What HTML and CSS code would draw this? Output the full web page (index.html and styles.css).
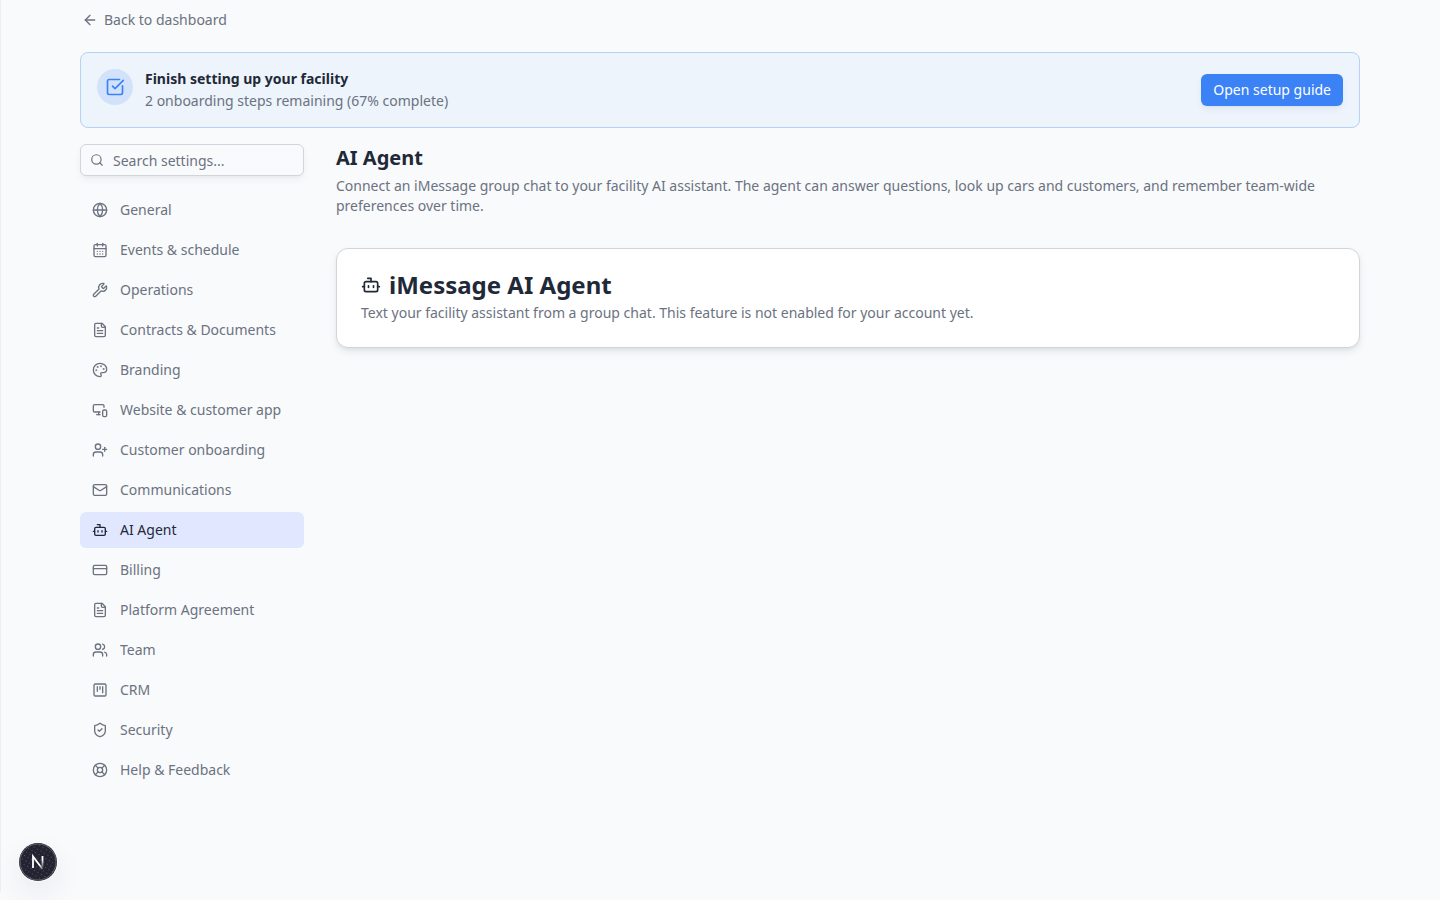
FILE: index.html
```html
<!DOCTYPE html>
<html lang="en">
<head>
    <meta charset="UTF-8">
    <meta name="viewport" content="width=device-width, initial-scale=1.0">
    <title>AI Agent - Settings</title>
    <link rel="stylesheet" href="styles.css">
</head>
<body>
    <div class="page">
        <div class="container">
            <a href="#" class="back-link">
                <svg class="icon" viewBox="0 0 24 24"><path d="m12 19-7-7 7-7"/><path d="M19 12H5"/></svg>
                Back to dashboard
            </a>

            <section class="banner">
                <div class="banner-icon">
                    <svg class="icon icon-lg" viewBox="0 0 24 24"><path d="M21 10.656V19a2 2 0 0 1-2 2H5a2 2 0 0 1-2-2V5a2 2 0 0 1 2-2h12.344"/><path d="m9 11 3 3L22 4"/></svg>
                </div>
                <div class="banner-text">
                    <p class="banner-title">Finish setting up your facility</p>
                    <p class="banner-sub">2 onboarding steps remaining (67% complete)</p>
                </div>
                <button type="button" class="btn-primary">Open setup guide</button>
            </section>

            <div class="layout">
                <aside class="sidebar">
                    <div class="search">
                        <svg class="icon search-icon" viewBox="0 0 24 24"><path d="m21 21-4.34-4.34"/><circle cx="11" cy="11" r="8"/></svg>
                        <input type="search" id="settingsSearch" placeholder="Search settings..." aria-label="Search settings">
                    </div>

                    <nav class="nav" aria-label="Settings">
                        <a href="#" class="nav-item">
                            <svg class="icon" viewBox="0 0 24 24"><circle cx="12" cy="12" r="10"/><path d="M12 2a14.5 14.5 0 0 0 0 20 14.5 14.5 0 0 0 0-20"/><path d="M2 12h20"/></svg>
                            General
                        </a>
                        <a href="#" class="nav-item">
                            <svg class="icon" viewBox="0 0 24 24"><path d="M8 2v4"/><path d="M16 2v4"/><rect width="18" height="18" x="3" y="4" rx="2"/><path d="M3 10h18"/><path d="M8 14h.01"/><path d="M12 14h.01"/><path d="M16 14h.01"/><path d="M8 18h.01"/><path d="M12 18h.01"/><path d="M16 18h.01"/></svg>
                            Events &amp; schedule
                        </a>
                        <a href="#" class="nav-item">
                            <svg class="icon" viewBox="0 0 24 24"><path d="M14.7 6.3a1 1 0 0 0 0 1.4l1.6 1.6a1 1 0 0 0 1.4 0l3.106-3.105c.32-.322.863-.22.983.218a6 6 0 0 1-8.259 7.057l-7.91 7.91a1 1 0 0 1-2.999-3l7.91-7.91a6 6 0 0 1 7.057-8.259c.438.12.54.662.219.984z"/></svg>
                            Operations
                        </a>
                        <a href="#" class="nav-item">
                            <svg class="icon" viewBox="0 0 24 24"><path d="M15 2H6a2 2 0 0 0-2 2v16a2 2 0 0 0 2 2h12a2 2 0 0 0 2-2V7Z"/><path d="M14 2v4a2 2 0 0 0 2 2h4"/><path d="M10 9H8"/><path d="M16 13H8"/><path d="M16 17H8"/></svg>
                            Contracts &amp; Documents
                        </a>
                        <a href="#" class="nav-item">
                            <svg class="icon" viewBox="0 0 24 24"><path d="M12 22a1 1 0 0 1 0-20 10 9 0 0 1 10 9 5 5 0 0 1-5 5h-2.25a1.75 1.75 0 0 0-1.4 2.8l.3.4a1.75 1.75 0 0 1-1.4 2.8z"/><circle cx="13.5" cy="6.5" r=".5"/><circle cx="17.5" cy="10.5" r=".5"/><circle cx="6.5" cy="12.5" r=".5"/><circle cx="8.5" cy="7.5" r=".5"/></svg>
                            Branding
                        </a>
                        <a href="#" class="nav-item">
                            <svg class="icon" viewBox="0 0 24 24"><path d="M18 8V6a2 2 0 0 0-2-2H4a2 2 0 0 0-2 2v7a2 2 0 0 0 2 2h8"/><path d="M10 19v-3.96 3.15"/><path d="M7 19h5"/><rect width="6" height="10" x="16" y="12" rx="2"/></svg>
                            Website &amp; customer app
                        </a>
                        <a href="#" class="nav-item">
                            <svg class="icon" viewBox="0 0 24 24"><path d="M16 21v-2a4 4 0 0 0-4-4H6a4 4 0 0 0-4 4v2"/><circle cx="9" cy="7" r="4"/><path d="M19 8v6"/><path d="M22 11h-6"/></svg>
                            Customer onboarding
                        </a>
                        <a href="#" class="nav-item">
                            <svg class="icon" viewBox="0 0 24 24"><path d="m22 7-8.991 5.727a2 2 0 0 1-2.009 0L2 7"/><rect width="20" height="16" x="2" y="4" rx="2"/></svg>
                            Communications
                        </a>
                        <a href="#" class="nav-item active" aria-current="page">
                            <svg class="icon" viewBox="0 0 24 24"><path d="M12 8V4H8"/><rect width="16" height="12" x="4" y="8" rx="2"/><path d="M2 14h2"/><path d="M20 14h2"/><path d="M15 13v2"/><path d="M9 13v2"/></svg>
                            AI Agent
                        </a>
                        <a href="#" class="nav-item">
                            <svg class="icon" viewBox="0 0 24 24"><rect width="20" height="14" x="2" y="5" rx="2"/><path d="M2 10h20"/></svg>
                            Billing
                        </a>
                        <a href="#" class="nav-item">
                            <svg class="icon" viewBox="0 0 24 24"><path d="M15 2H6a2 2 0 0 0-2 2v16a2 2 0 0 0 2 2h12a2 2 0 0 0 2-2V7Z"/><path d="M14 2v4a2 2 0 0 0 2 2h4"/><path d="M10 9H8"/><path d="M16 13H8"/><path d="M16 17H8"/></svg>
                            Platform Agreement
                        </a>
                        <a href="#" class="nav-item">
                            <svg class="icon" viewBox="0 0 24 24"><path d="M16 21v-2a4 4 0 0 0-4-4H6a4 4 0 0 0-4 4v2"/><path d="M16 3.128a4 4 0 0 1 0 7.744"/><path d="M22 21v-2a4 4 0 0 0-3-3.87"/><circle cx="9" cy="7" r="4"/></svg>
                            Team
                        </a>
                        <a href="#" class="nav-item">
                            <svg class="icon" viewBox="0 0 24 24"><rect width="18" height="18" x="3" y="3" rx="2"/><path d="M8 7v7"/><path d="M12 7v4"/><path d="M16 7v9"/></svg>
                            CRM
                        </a>
                        <a href="#" class="nav-item">
                            <svg class="icon" viewBox="0 0 24 24"><path d="M20 13c0 5-3.5 7.5-7.66 8.95a1 1 0 0 1-.67-.01C7.5 20.5 4 18 4 13V6a1 1 0 0 1 1-1c2 0 4.5-1.2 6.24-2.72a1.17 1.17 0 0 1 1.52 0C14.51 3.81 17 5 19 5a1 1 0 0 1 1 1z"/><path d="m9 12 2 2 4-4"/></svg>
                            Security
                        </a>
                        <a href="#" class="nav-item">
                            <svg class="icon" viewBox="0 0 24 24"><circle cx="12" cy="12" r="10"/><path d="m4.93 4.93 4.24 4.24"/><path d="m14.83 9.17 4.24-4.24"/><path d="m14.83 14.83 4.24 4.24"/><path d="m9.17 14.83-4.24 4.24"/><circle cx="12" cy="12" r="4"/></svg>
                            Help &amp; Feedback
                        </a>
                    </nav>
                </aside>

                <main class="content">
                    <h1>AI Agent</h1>
                    <p class="description">Connect an iMessage group chat to your facility AI assistant. The agent can answer questions, look up cars and customers, and remember team-wide preferences over time.</p>

                    <section class="card">
                        <h2 class="card-title">
                            <svg class="icon icon-lg" viewBox="0 0 24 24"><path d="M12 8V4H8"/><rect width="16" height="12" x="4" y="8" rx="2"/><path d="M2 14h2"/><path d="M20 14h2"/><path d="M15 13v2"/><path d="M9 13v2"/></svg>
                            iMessage AI Agent
                        </h2>
                        <p class="card-text">Text your facility assistant from a group chat. This feature is not enabled for your account yet.</p>
                    </section>
                </main>
            </div>
        </div>
    </div>

    <button type="button" class="dev-button" aria-label="Open developer tools">
        <svg viewBox="0 0 40 40" width="40" height="40" fill="none">
            <defs>
                <linearGradient id="stem" x1="0" y1="14" x2="0" y2="26" gradientUnits="userSpaceOnUse">
                    <stop offset="0.3" stop-color="#fff"/>
                    <stop offset="1" stop-color="#fff" stop-opacity="0.1"/>
                </linearGradient>
                <linearGradient id="slash" x1="15" y1="15" x2="26" y2="28" gradientUnits="userSpaceOnUse">
                    <stop offset="0.6" stop-color="#fff"/>
                    <stop offset="1" stop-color="#fff" stop-opacity="0.1"/>
                </linearGradient>
                <pattern id="dots" width="4" height="4" patternUnits="userSpaceOnUse" patternTransform="rotate(30)">
                    <rect width="1" height="1" fill="#85454a"/>
                </pattern>
            </defs>
            <circle cx="20" cy="20" r="19" fill="#1f2532"/>
            <circle cx="20" cy="20" r="18" fill="url(#dots)" stroke="#66616a"/>
            <path d="M15 26V14.500L24.500 27" stroke="url(#slash)" stroke-width="1.800"/>
            <path d="M24.500 14v11" stroke="url(#stem)" stroke-width="1.800"/>
        </svg>
    </button>
</body>
</html>
```

FILE: styles.css
```css
* {
    box-sizing: border-box;
}

body {
    margin: 0;
    font-family: "Noto Sans", sans-serif;
    font-size: 14px;
    line-height: 20px;
    color: #1f2937;
    background-color: #f9fafc;
}

h1, h2, p {
    margin: 0;
}

a {
    color: inherit;
    text-decoration: none;
}

.page {
    min-height: calc(100vh - 8px);
    padding: 10px 24px 32px;
    box-shadow: inset 1px 0 0 #eceef2;
}

.container {
    max-width: 1280px;
    margin: 0 auto;
}

.icon {
    width: 16px;
    height: 16px;
    flex-shrink: 0;
    fill: none;
    stroke: currentColor;
    stroke-width: 2;
    stroke-linecap: round;
    stroke-linejoin: round;
}

.icon-lg {
    width: 20px;
    height: 20px;
}

.back-link {
    display: flex;
    align-items: center;
    gap: 6px;
    width: fit-content;
    padding-left: 2px;
    color: #6b7280;
}

/* Onboarding banner */
.banner {
    display: flex;
    align-items: center;
    gap: 12px;
    margin-top: 22px;
    padding: 16px;
    border: 1px solid #b5d0fa;
    border-radius: 8px;
    background-color: #edf4fc;
}

.banner-icon {
    display: flex;
    align-items: center;
    justify-content: center;
    align-self: flex-start;
    width: 36px;
    height: 36px;
    flex-shrink: 0;
    border-radius: 50%;
    color: #3b82f6;
    background-color: #d3e2fb;
}

.banner-text {
    flex: 1;
}

.banner-title {
    font-weight: 700;
}

.banner-sub {
    margin-top: 2px;
    color: #6b7280;
}

.btn-primary {
    height: 32px;
    padding: 0 12px;
    border: none;
    border-radius: 6px;
    font: inherit;
    color: white;
    background-color: #3b82f6;
    box-shadow: 0 4px 8px -1px rgba(30, 41, 90, 0.06), 0 2px 4px -2px rgba(30, 41, 90, 0.06);
    cursor: pointer;
}

.btn-primary:hover {
    background-color: #2f74e6;
}

/* Sidebar */
.layout {
    display: flex;
    gap: 32px;
    margin-top: 16px;
}

.sidebar {
    width: 224px;
    flex-shrink: 0;
}

.search {
    position: relative;
}

.search-icon {
    position: absolute;
    top: 9px;
    left: 10px;
    width: 14px;
    height: 14px;
    color: #6b7280;
}

.search input {
    display: block;
    width: 100%;
    height: 32px;
    padding: 0 12px 0 32px;
    border: 1px solid #d1d5db;
    border-radius: 6px;
    font: inherit;
    color: inherit;
    background-color: #f9fafc;
    box-shadow: 0 4px 8px -1px rgba(30, 41, 59, 0.06), 0 2px 4px -2px rgba(30, 41, 59, 0.06);
}

.search input::placeholder {
    color: #6b7280;
}

.nav {
    display: flex;
    flex-direction: column;
    gap: 4px;
    margin-top: 16px;
}

.nav-item {
    display: flex;
    align-items: center;
    gap: 12px;
    padding: 8px 12px;
    border-radius: 6px;
    color: #6b7280;
}

.nav-item:hover,
.nav-item.active {
    color: #1f2937;
    background-color: #e0e7ff;
}

/* Content */
.content {
    flex: 1;
    min-width: 0;
}

h1 {
    font-size: 20px;
    line-height: 28px;
    font-weight: 700;
}

.description {
    margin-top: 4px;
    color: #6b7280;
}

.card {
    margin-top: 32px;
    padding: 24px;
    border: 1px solid #d1d5db;
    border-radius: 12px;
    background-color: white;
    box-shadow: 0 4px 8px -1px rgba(30, 41, 59, 0.1), 0 2px 4px -2px rgba(30, 41, 59, 0.1);
}

.card-title {
    display: flex;
    align-items: center;
    gap: 8px;
    font-size: 24px;
    line-height: 24px;
    font-weight: 700;
}

.card-text {
    margin-top: 6px;
    color: #6b7280;
}

.dev-button {
    position: fixed;
    bottom: 18px;
    left: 18px;
    width: 40px;
    height: 40px;
    padding: 0;
    border: none;
    border-radius: 50%;
    background: none;
    box-shadow: 0 12px 28px rgba(30, 41, 59, 0.07);
    cursor: pointer;
}

.dev-button svg {
    display: block;
}
```
